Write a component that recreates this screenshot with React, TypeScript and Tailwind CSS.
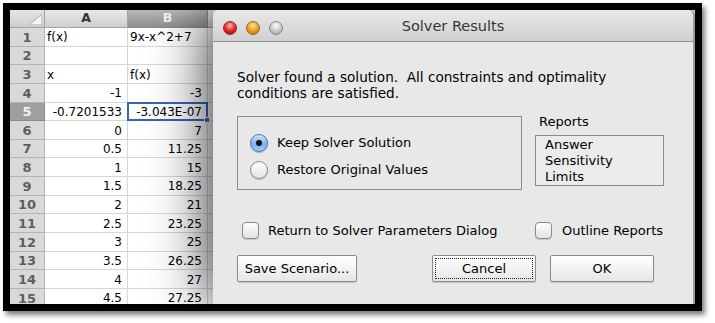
import React from "react";

const rows: [string, string, boolean?][] = [
  ["f(x)", "9x-x^2+7", true],
  ["", "", true],
  ["x", "f(x)", true],
  ["-1", "-3"],
  ["-0.7201533", "-3.043E-07"],
  ["0", "7"],
  ["0.5", "11.25"],
  ["1", "15"],
  ["1.5", "18.25"],
  ["2", "21"],
  ["2.5", "23.25"],
  ["3", "25"],
  ["3.5", "26.25"],
  ["4", "27"],
  ["4.5", "27.25"],
];

const sheetFont = { fontFamily: '"DejaVu Sans", "Liberation Sans", sans-serif' };

function Sheet() {
  return (
    <div className="w-[203px] shrink-0 flex flex-col bg-white text-[12px] text-black" style={sheetFont}>
      <div className="flex h-[18px] shrink-0">
        <div className="w-[35px] h-full relative bg-[linear-gradient(#e6e6e6,#cdcdcd)] border-r border-b border-[#a2a2a2]">
          <svg className="absolute right-[2px] bottom-[2px]" width="13" height="11" viewBox="0 0 13 11">
            <polygon points="13,0 13,11 0,11" fill="#f6f6f6" stroke="#a8a8a8" strokeWidth="1" />
          </svg>
        </div>
        <div className="w-[83px] h-full flex items-center justify-center font-bold text-[12.5px] text-[#333] bg-[linear-gradient(#e9e9e9,#cfcfcf)] border-r border-b border-[#a2a2a2]">
          A
        </div>
        <div className="w-[80px] h-full flex items-center justify-center font-bold text-[12.5px] text-[#f4f4f4] bg-[linear-gradient(#b9b9b9,#8f8f8f)] border-r border-b border-[#8a8a8a]">
          B
        </div>
        <div className="w-[5px] h-full bg-[linear-gradient(#e9e9e9,#cfcfcf)] border-b border-[#a2a2a2]" />
      </div>
      {rows.map((r, i) => {
        const sel = i === 4;
        const left = r[2];
        return (
          <div key={i} className="flex h-[18.65px] shrink-0">
            <div
              className={`w-[35px] h-full flex items-center justify-center pt-[1px] font-bold text-[13px] border-r border-b ${
                sel ? "bg-[#9f9f9f] text-[#f2f2f2] border-[#8a8a8a]" : "bg-[#d9d9d9] text-[#5e5e5e] border-[#b3b3b3]"
              }`}
            >
              {i + 1}
            </div>
            <div
              className={`w-[83px] h-full flex items-center pt-[1px] border-r border-b border-[#d6d6d6] ${
                left ? "justify-start pl-[2px]" : "justify-end pr-[5px]"
              }`}
            >
              {r[0]}
            </div>
            <div
              className={`w-[80px] h-full relative flex items-center pt-[1px] border-r border-b border-[#d6d6d6] ${
                left ? "justify-start pl-[2px]" : "justify-end pr-[5px]"
              }`}
            >
              {r[1]}
              {sel && (
                <>
                  <div className="absolute -left-px -top-px right-[-1px] bottom-[-1px] border-2 border-[#3563c0]" />
                  <div className="absolute right-[-3px] bottom-[-3px] w-[6px] h-[6px] bg-[#3563c0] border border-white" />
                </>
              )}
            </div>
            <div className="w-[5px] h-full border-b border-[#d6d6d6]" />
          </div>
        );
      })}
    </div>
  );
}

function Radio({ checked }: { checked?: boolean }) {
  return checked ? (
    <div className="w-[18px] h-[18px] rounded-full border border-[#4a77b4] bg-[linear-gradient(#cfe2f8,#7fb2ee_55%,#9cc6f5)] shadow-[0_1px_1px_rgba(0,0,0,0.25)] flex items-center justify-center shrink-0">
      <div className="w-[6px] h-[6px] rounded-full bg-[#111]" />
    </div>
  ) : (
    <div className="w-[18px] h-[18px] rounded-full border border-[#8a8a8a] bg-[linear-gradient(#ffffff,#e3e3e3)] shadow-[0_1px_1px_rgba(0,0,0,0.2)] shrink-0" />
  );
}

function Checkbox() {
  return (
    <div className="w-[17px] h-[17px] rounded-[4px] border border-[#8a8a8a] bg-[linear-gradient(#ffffff,#e2e2e2)] shadow-[0_1px_1px_rgba(0,0,0,0.15)] shrink-0" />
  );
}

function Button({ label, w, focus }: { label: string; w: string; focus?: boolean }) {
  return (
    <div
      className={`${w} h-[27px] rounded-[2px] border border-[#8c8c8c] bg-[linear-gradient(#ffffff,#f3f3f3_50%,#e6e6e6)] shadow-[0_1px_1px_rgba(0,0,0,0.15)] p-[2px] shrink-0`}
    >
      <div
        className={`w-full h-full flex items-center justify-center text-[13px] text-black ${
          focus ? "border border-dotted border-[#222]" : ""
        }`}
      >
        {label}
      </div>
    </div>
  );
}

function Dialog() {
  return (
    <div
      className="relative z-10 flex-1 flex flex-col rounded-t-[6px] bg-[#e8e8e8] border-r-2 border-[#9a9a9a] shadow-[0_0_60px_rgba(0,0,0,0.9)] text-black"
      style={{ fontFamily: '"DejaVu Sans", "Liberation Sans", sans-serif' }}
    >
      <div className="h-[32px] shrink-0 rounded-t-[6px] bg-[linear-gradient(#e9e9e9,#d0d0d0)] border-b border-[#8f8f8f] relative flex items-center">
        <div className="absolute left-[10px] top-[11px] flex gap-[9px]">
          <div className="w-[14px] h-[14px] rounded-full bg-[radial-gradient(circle_at_50%_30%,#ffb0b0,#e0201e_55%,#a00a0a)] border border-[#8d2a2a]" />
          <div className="w-[14px] h-[14px] rounded-full bg-[radial-gradient(circle_at_50%_30%,#ffe2a0,#e79a14_55%,#b36a06)] border border-[#9a6a1c]" />
          <div className="w-[14px] h-[14px] rounded-full bg-[radial-gradient(circle_at_50%_30%,#fafafa,#c7c7c7_55%,#9c9c9c)] border border-[#8a8a8a]" />
        </div>
        <div className="w-full text-center text-[14.5px] text-[#363636] pt-[3px]">Solver Results</div>
      </div>
      <div className="flex-1 flex flex-col pl-[24px]">
        <div className="mt-[27px] text-[13.6px] leading-[16px] whitespace-pre">
          {"Solver found a solution.  All constraints and optimality\nconditions are satisfied."}
        </div>
        <div className="mt-[13px] flex gap-[13px]">
          <div className="mt-[2px] w-[285px] h-[74px] border border-[#8b8b8b] pl-[12px] pt-[17px] flex flex-col gap-[9px] text-[13px]">
            <div className="flex items-center gap-[9px] h-[18px]">
              <Radio checked />
              <span>Keep Solver Solution</span>
            </div>
            <div className="flex items-center gap-[9px] h-[18px]">
              <Radio />
              <span>Restore Original Values</span>
            </div>
          </div>
          <div className="w-[129px] flex flex-col">
            <div className="h-[16px] leading-[16px] text-[13px] pl-[4px]">Reports</div>
            <div className="mt-[5px] h-[51px] border border-[#8b8b8b] bg-[#ebebeb] pl-[9px] pt-[1px] text-[13px] leading-[16px]">
              <div>Answer</div>
              <div>Sensitivity</div>
              <div>Limits</div>
            </div>
          </div>
        </div>
        <div className="mt-[32px] flex items-center h-[17px] text-[13px]">
          <div className="w-[298px] pl-[5px] flex items-center gap-[9px]">
            <Checkbox />
            <span>Return to Solver Parameters Dialog</span>
          </div>
          <div className="flex items-center gap-[10px]">
            <Checkbox />
            <span>Outline Reports</span>
          </div>
        </div>
        <div className="mt-[16px] flex">
          <Button label="Save Scenario..." w="w-[120px]" />
          <div className="w-[75px]" />
          <Button label="Cancel" w="w-[104px]" focus />
          <div className="w-[14px]" />
          <Button label="OK" w="w-[104px]" />
        </div>
      </div>
    </div>
  );
}

export default function App() {
  return (
    <div className="w-[715px] h-[323px] bg-white pt-[3px] pl-[3px]">
      <div className="w-[699px] h-[308px] border-[7px] border-black shadow-[3px_4px_5px_rgba(0,0,0,0.5)] overflow-hidden flex bg-white">
        <Sheet />
        <Dialog />
      </div>
    </div>
  );
}
